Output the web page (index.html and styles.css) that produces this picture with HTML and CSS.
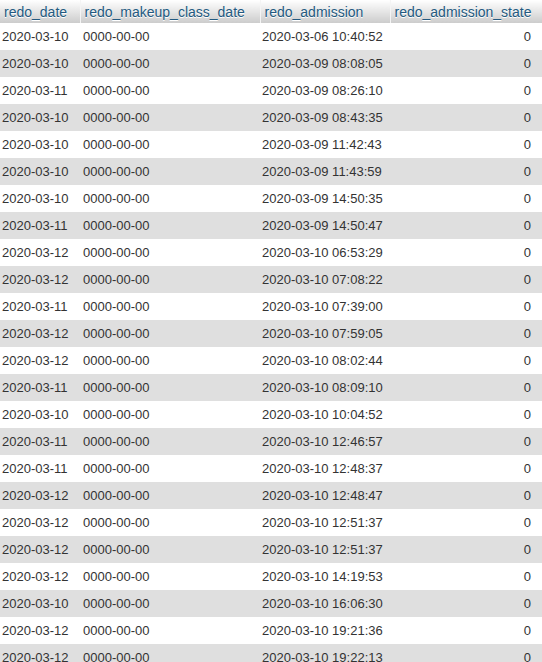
FILE: index.html
```html
<!DOCTYPE html>
<html>
<head>
<meta charset="utf-8">
<link rel="stylesheet" href="styles.css">
</head>
<body>
<table class="grid">
<colgroup><col class="c1"><col class="c2"><col class="c3"><col class="c4"></colgroup>
<thead>
<tr><th>redo_date</th><th>redo_makeup_class_date</th><th>redo_admission</th><th>redo_admission_state</th></tr>
</thead>
<tbody>
<tr><td>2020-03-10</td><td>0000-00-00</td><td>2020-03-06 10:40:52</td><td class="num">0</td></tr>
<tr><td>2020-03-10</td><td>0000-00-00</td><td>2020-03-09 08:08:05</td><td class="num">0</td></tr>
<tr><td>2020-03-11</td><td>0000-00-00</td><td>2020-03-09 08:26:10</td><td class="num">0</td></tr>
<tr><td>2020-03-10</td><td>0000-00-00</td><td>2020-03-09 08:43:35</td><td class="num">0</td></tr>
<tr><td>2020-03-10</td><td>0000-00-00</td><td>2020-03-09 11:42:43</td><td class="num">0</td></tr>
<tr><td>2020-03-10</td><td>0000-00-00</td><td>2020-03-09 11:43:59</td><td class="num">0</td></tr>
<tr><td>2020-03-10</td><td>0000-00-00</td><td>2020-03-09 14:50:35</td><td class="num">0</td></tr>
<tr><td>2020-03-11</td><td>0000-00-00</td><td>2020-03-09 14:50:47</td><td class="num">0</td></tr>
<tr><td>2020-03-12</td><td>0000-00-00</td><td>2020-03-10 06:53:29</td><td class="num">0</td></tr>
<tr><td>2020-03-12</td><td>0000-00-00</td><td>2020-03-10 07:08:22</td><td class="num">0</td></tr>
<tr><td>2020-03-11</td><td>0000-00-00</td><td>2020-03-10 07:39:00</td><td class="num">0</td></tr>
<tr><td>2020-03-12</td><td>0000-00-00</td><td>2020-03-10 07:59:05</td><td class="num">0</td></tr>
<tr><td>2020-03-12</td><td>0000-00-00</td><td>2020-03-10 08:02:44</td><td class="num">0</td></tr>
<tr><td>2020-03-11</td><td>0000-00-00</td><td>2020-03-10 08:09:10</td><td class="num">0</td></tr>
<tr><td>2020-03-10</td><td>0000-00-00</td><td>2020-03-10 10:04:52</td><td class="num">0</td></tr>
<tr><td>2020-03-11</td><td>0000-00-00</td><td>2020-03-10 12:46:57</td><td class="num">0</td></tr>
<tr><td>2020-03-11</td><td>0000-00-00</td><td>2020-03-10 12:48:37</td><td class="num">0</td></tr>
<tr><td>2020-03-12</td><td>0000-00-00</td><td>2020-03-10 12:48:47</td><td class="num">0</td></tr>
<tr><td>2020-03-12</td><td>0000-00-00</td><td>2020-03-10 12:51:37</td><td class="num">0</td></tr>
<tr><td>2020-03-12</td><td>0000-00-00</td><td>2020-03-10 12:51:37</td><td class="num">0</td></tr>
<tr><td>2020-03-12</td><td>0000-00-00</td><td>2020-03-10 14:19:53</td><td class="num">0</td></tr>
<tr><td>2020-03-10</td><td>0000-00-00</td><td>2020-03-10 16:06:30</td><td class="num">0</td></tr>
<tr><td>2020-03-12</td><td>0000-00-00</td><td>2020-03-10 19:21:36</td><td class="num">0</td></tr>
<tr><td>2020-03-12</td><td>0000-00-00</td><td>2020-03-10 19:22:13</td><td class="num">0</td></tr>
</tbody>
</table>
</body>
</html>
```
FILE: styles.css
```css
html, body {
  margin: 0;
  padding: 0;
  background: #fff;
  overflow: hidden;
}
.grid {
  border-collapse: collapse;
  table-layout: fixed;
  width: 542px;
  font-family: "Liberation Sans", Arial, sans-serif;
  font-size: 13px;
  color: #333;
}
.c1 { width: 80px; }
.c2 { width: 180px; }
.c3 { width: 130px; }
.c4 { width: 152px; }
.grid th {
  text-align: left;
  font-weight: normal;
  font-size: 14px;
  color: #235a81;
  text-shadow: 0 1px 0 #fff;
  background: linear-gradient(#ffffff, #cccccc);
  line-height: 16px;
  height: 23px;
  padding: 0 4px;
  box-sizing: border-box;
  border-right: 1px solid #f4f4f4;
  white-space: nowrap;
}
.grid th:last-child { border-right: none; }
.grid td {
  line-height: 15px;
  height: 27px;
  padding: 0 3px 0 2px;
  box-sizing: border-box;
  white-space: nowrap;
}
.grid td:nth-child(2) { padding-left: 3px; }
.grid tbody tr:nth-child(even) td { background: #dfdfdf; }
.grid td.num { text-align: right; padding-right: 11px; }
```
